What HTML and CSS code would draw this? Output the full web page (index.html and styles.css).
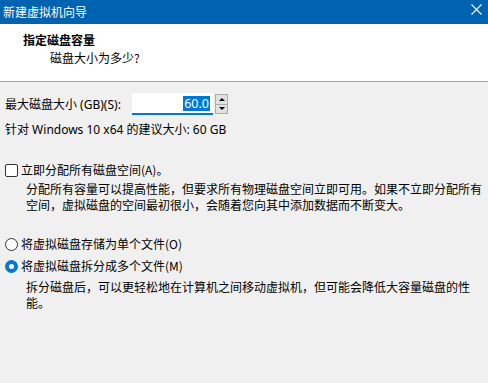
FILE: index.html
```html
<!DOCTYPE html>
<html>
<head>
  <meta charset="utf-8">
  <title>新建虚拟机向导</title>
  <link rel="stylesheet" href="styles.css">
</head>
<body>
  <div class="window">
    <div class="titlebar">
      <span class="title">新建虚拟机向导</span>
      <span class="close">
        <svg width="11" height="11" viewBox="0 0 11 11"><path d="M0.5 0.5 L10.5 10.5 M10.5 0.5 L0.5 10.5" stroke="#fff" stroke-width="1.1"/></svg>
      </span>
    </div>

    <div class="header">
      <div class="header-title">指定磁盘容量</div>
      <div class="header-sub">磁盘大小为多少?</div>
    </div>

    <div class="content">
      <div class="size-row">
        <label>最大磁盘大小 (GB)(S):</label>
        <div class="spin">
          <div class="spin-input"><span class="sel">60.0</span></div>
          <div class="spin-buttons">
            <div class="spin-btn"><span class="tri-up"></span></div>
            <div class="spin-btn"><span class="tri-down"></span></div>
          </div>
        </div>
      </div>
      <div class="hint">针对 Windows 10 x64 的建议大小: 60 GB</div>

      <div class="option check-row">
        <span class="checkbox"></span>
        <span>立即分配所有磁盘空间(A)。</span>
      </div>
      <div class="desc">分配所有容量可以提高性能，但要求所有物理磁盘空间立即可用。如果不立即分配所有<br>空间，虚拟磁盘的空间最初很小，会随着您向其中添加数据而不断变大。</div>

      <div class="option radio-first">
        <span class="radio"></span>
        <span>将虚拟磁盘存储为单个文件(O)</span>
      </div>
      <div class="option radio-second">
        <span class="radio checked"></span>
        <span>将虚拟磁盘拆分成多个文件(M)</span>
      </div>
      <div class="desc desc-split">拆分磁盘后，可以更轻松地在计算机之间移动虚拟机，但可能会降低大容量磁盘的性<br>能。</div>
    </div>
  </div>
</body>
</html>
```

FILE: styles.css
```css
html,
body {
  margin: 0;
  padding: 0;
}

body {
  width: 488px;
  height: 383px;
  overflow: hidden;
  background-color: #f0f0f0;
  font-family: "Noto Sans", "Noto Sans CJK SC", sans-serif;
  font-size: 12px;
  color: #000;
}

.titlebar {
  height: 24px;
  background-color: #0063b1;
  color: #fff;
  display: flex;
  align-items: center;
  justify-content: space-between;
  padding: 0 6px 0 3px;
}

.title {
  font-family: "Noto Sans CJK SC", sans-serif;
  font-size: 12px;
  margin-top: -2px;
}

.close {
  display: flex;
  margin-top: -6px;
}

.header {
  background-color: #fff;
  border-bottom: 1px solid #a0a0a0;
  padding-top: 8px;
  box-sizing: border-box;
  height: 58px;
}

.header-title {
  font-family: "Noto Sans CJK SC", sans-serif;
  font-weight: bold;
  line-height: 16px;
  padding-left: 23px;
}

.header-sub {
  font-family: "Noto Sans CJK SC", sans-serif;
  line-height: 16px;
  margin-top: 2px;
  padding-left: 50px;
}

.content {
  padding: 11px 5px 0 5px;
}

.size-row {
  display: flex;
  align-items: center;
  height: 22px;
}

.size-row label {
  width: 127px;
}

.spin {
  display: flex;
  height: 22px;
}

.spin-input {
  width: 81px;
  height: 22px;
  box-sizing: border-box;
  background-color: #fff;
  border-bottom: 2px solid #0078d7;
  display: flex;
  align-items: center;
  justify-content: flex-end;
  padding-right: 3px;
  font-size: 12.5px;
}

.sel {
  background-color: #0078d7;
  color: #fff;
  line-height: 15px;
  padding: 0 1px;
}

.spin-buttons {
  width: 13px;
  height: 20px;
  margin-left: 2px;
  margin-top: 1px;
  display: flex;
  flex-direction: column;
  border: 1px solid #adadad;
  box-sizing: border-box;
}

.spin-btn {
  flex: 1;
  background-color: #e1e1e1;
  display: flex;
  align-items: center;
  justify-content: center;
}

.spin-btn + .spin-btn {
  border-top: 1px solid #adadad;
}

.tri-up {
  width: 0;
  height: 0;
  border-left: 3px solid transparent;
  border-right: 3px solid transparent;
  border-bottom: 3px solid #000;
}

.tri-down {
  width: 0;
  height: 0;
  border-left: 3px solid transparent;
  border-right: 3px solid transparent;
  border-top: 3px solid #000;
}

.hint {
  line-height: 16px;
  margin-top: 7px;
}

.option {
  display: flex;
  align-items: center;
  line-height: 16px;
  font-family: "Noto Sans CJK SC", sans-serif;
}

.check-row {
  margin-top: 24px;
}

.checkbox {
  width: 13px;
  height: 13px;
  box-sizing: border-box;
  border: 1px solid #333;
  border-radius: 2px;
  background-color: #fff;
  margin-right: 3px;
}

.desc {
  font-family: "Noto Sans CJK SC", sans-serif;
  line-height: 16px;
  margin: 3px 0 0 21px;
  white-space: nowrap;
}

.radio-first {
  margin-top: 23px;
}

.radio-second {
  margin-top: 6px;
}

.radio {
  width: 13px;
  height: 13px;
  box-sizing: border-box;
  border: 1px solid #333;
  border-radius: 50%;
  background-color: #fff;
  margin-right: 3px;
}

.radio.checked {
  border: 4px solid #0078d7;
}

.desc-split {
  line-height: 16px;
  margin-top: 5px;
}
```
